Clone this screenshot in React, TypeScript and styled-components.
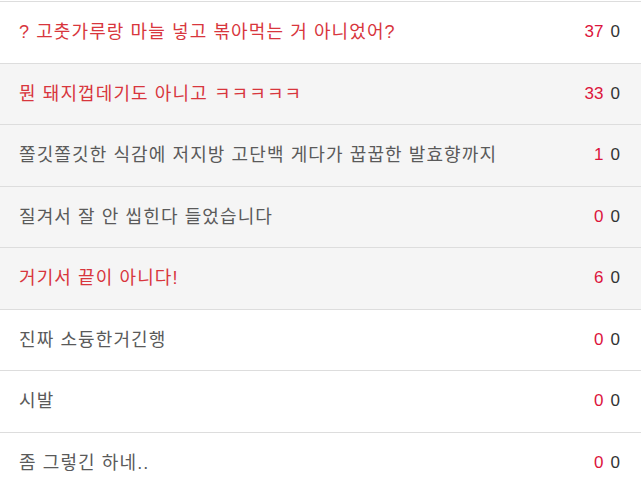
import React from "react";
import styled, { createGlobalStyle } from "styled-components";

const Global = createGlobalStyle`
  html, body { margin: 0; padding: 0; background: #fff; }
  body { font-family: "Liberation Sans", "Noto Sans CJK KR", sans-serif; }
`;

const List = styled.ul`
  list-style: none;
  margin: 0;
  padding: 1px 0 0;
  border-bottom: 1px solid #ddd;
`;

const Row = styled.li<{ $shaded: boolean }>`
  display: flex;
  align-items: center;
  justify-content: space-between;
  border-top: 1px solid #dddddd;
  background: ${(p) => (p.$shaded ? "#f5f5f5" : "#ffffff")};
  padding: 20px 21px 20px 19px;
  line-height: 20.5px;
  font-size: 16px;
`;

const Title = styled.span<{ $hot: boolean }>`
  color: ${(p) => (p.$hot ? "#d8363d" : "#5a5a5a")};
  font-size: 18px;
  letter-spacing: 1.1px;
`;

const Counts = styled.span`
  display: flex;
  gap: 7px;
  font-size: 17px;
`;

const Up = styled.span`
  color: #dc143c;
`;

const Down = styled.span`
  color: #333333;
`;

const items = [
  { t: "? 고춧가루랑 마늘 넣고 볶아먹는 거 아니었어?", up: 37, down: 0, hot: true, shaded: false },
  { t: "뭔 돼지껍데기도 아니고 ㅋㅋㅋㅋㅋ", up: 33, down: 0, hot: true, shaded: true },
  { t: "쫄깃쫄깃한 식감에 저지방 고단백 게다가 꿉꿉한 발효향까지", up: 1, down: 0, hot: false, shaded: true },
  { t: "질겨서 잘 안 씹힌다 들었습니다", up: 0, down: 0, hot: false, shaded: true },
  { t: "거기서 끝이 아니다!", up: 6, down: 0, hot: true, shaded: true },
  { t: "진짜 소듕한거긴행", up: 0, down: 0, hot: false, shaded: false },
  { t: "시발", up: 0, down: 0, hot: false, shaded: false },
  { t: "좀 그렇긴 하네..", up: 0, down: 0, hot: false, shaded: false },
];

export default function App() {
  return (
    <>
      <Global />
      <List>
        {items.map((it, i) => (
          <Row key={i} $shaded={it.shaded}>
            <Title $hot={it.hot}>{it.t}</Title>
            <Counts>
              <Up>{it.up}</Up>
              <Down>{it.down}</Down>
            </Counts>
          </Row>
        ))}
      </List>
    </>
  );
}
